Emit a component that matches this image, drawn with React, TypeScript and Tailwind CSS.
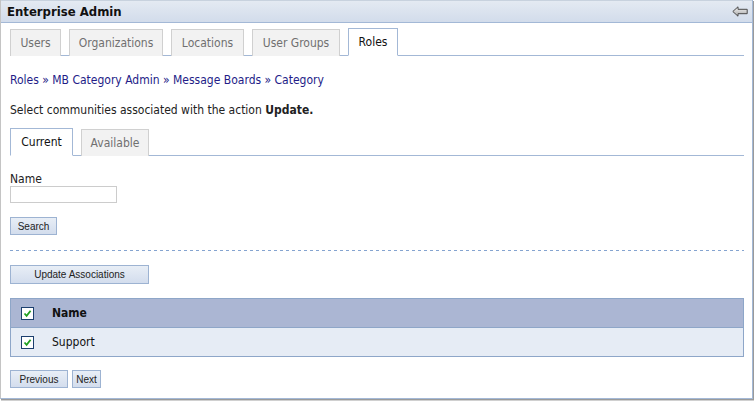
import React from 'react';

const font = { fontFamily: '"DejaVu Sans Condensed", "Liberation Sans", sans-serif' };

function Check() {
  return (
    <span className="inline-flex w-[13px] h-[13px] items-center justify-center border border-[#1c3f6e] bg-white">
      <svg width="9" height="9" viewBox="0 0 9 9">
        <path d="M1.5 4.5 L3.6 6.8 L7.6 1.8" fill="none" stroke="#21a021" strokeWidth="1.8" />
      </svg>
    </span>
  );
}

function BackArrow() {
  return (
    <svg width="16" height="11" viewBox="0 0 16 11">
      <defs>
        <linearGradient id="ag" x1="0" y1="0" x2="0" y2="1">
          <stop offset="0" stopColor="#f4f4f4" />
          <stop offset="1" stopColor="#a8a8a8" />
        </linearGradient>
      </defs>
      <path d="M0.8 5.5 L6 0.8 L6 3.3 L15.2 3.3 L15.2 7.7 L6 7.7 L6 10.2 Z" fill="url(#ag)" stroke="#4a4a4a" strokeWidth="1" strokeLinejoin="round" />
    </svg>
  );
}

function Tab({ label, active, w }: { label: string; active?: boolean; w: string }) {
  return (
    <div
      className={`${w} flex items-center justify-center text-[12px] border ${
        active
          ? 'bg-white border-[#a3b8d6] border-b-white text-[#111] mb-[-1px] h-[28px]'
          : 'bg-[#f2f2f2] border-[#d0d0d0] text-[#707070] mb-[-1px] border-b-0 h-[27px]'
      }`}
    >
      {label}
    </div>
  );
}

function Btn({ label, w }: { label: string; w: string }) {
  return (
    <button
      className={`${w} h-[18px] border border-[#9db3d2] bg-gradient-to-b from-[#e8eef6] to-[#d3dded] text-[10px] text-[#222] flex items-center justify-center`}
      style={{ fontFamily: '"Liberation Sans", Arial, sans-serif' }}
    >
      {label}
    </button>
  );
}

export default function App() {
  return (
    <div className="w-[754px] h-[401px] bg-white" style={font}>
      <div className="w-[753px] h-[399px] border-l border-l-[#c4c4c4] border-r border-b border-[#a3b8d6] shadow-[1px_1px_0_#9a9a9a,1px_2px_0_#d0d0d0] flex flex-col">
        {/* header */}
        <div className="h-[23px] shrink-0 flex items-center justify-between pl-[6px] pr-[4px] border-t border-t-[#c8d2de] border-b border-b-[#a3b8d6] bg-gradient-to-b from-[#e4eaf2] to-[#d2dceb]">
          <span className="font-bold text-[13px] text-[#111]">Enterprise Admin</span>
          <BackArrow />
        </div>

        <div className="flex-1 pl-[9px] pr-[8px] pt-[6px] flex flex-col">
          {/* main tabs */}
          <div className="flex gap-2 items-end border-b border-[#a3b8d6] h-[27px]">
            <Tab label="Users" w="w-[51px]" />
            <Tab label="Organizations" w="w-[94px]" />
            <Tab label="Locations" w="w-[73px]" />
            <Tab label="User Groups" w="w-[88px]" />
            <Tab label="Roles" w="w-[50px]" active />
          </div>

          <div className="mt-[17px] h-[14px] leading-[14px] text-[12px] text-[#231c87]">
            Roles » MB Category Admin » Message Boards » Category
          </div>

          <div className="mt-[16px] h-[14px] leading-[14px] text-[12px] text-[#222]">
            Select communities associated with the action <b>Update.</b>
          </div>

          {/* sub tabs */}
          <div className="mt-[11px] flex gap-2 items-end border-b border-[#a3b8d6] h-[28px]">
            <Tab label="Current" w="w-[63px]" active />
            <Tab label="Available" w="w-[68px]" />
          </div>

          <div className="mt-[16px] h-[14px] leading-[14px] text-[12px] text-[#222]">Name</div>
          <div className="w-[107px] h-[17px] border border-[#cccccc] bg-white" />

          <div className="mt-[14px]">
            <Btn label="Search" w="w-[47px]" />
          </div>

          <div className="mt-[15px] h-px bg-[repeating-linear-gradient(90deg,#85a4d0_0_3px,transparent_3px_6px)]" />

          <div className="mt-[14px]">
            <Btn label="Update Associations" w="w-[139px] h-[19px]" />
          </div>

          {/* table */}
          <div className="mt-[14px] border border-[#8ea6c8]">
            <div className="h-[29px] bg-[#abb6d3] border-b border-[#8ea6c8] flex items-center">
              <div className="w-[41px] pl-[10px] flex items-center">
                <Check />
              </div>
              <span className="font-bold text-[12px] text-[#111]">Name</span>
            </div>
            <div className="h-[28px] bg-[#e6ecf5] flex items-center">
              <div className="w-[41px] pl-[10px] flex items-center">
                <Check />
              </div>
              <span className="text-[12px] text-[#111]">Support</span>
            </div>
          </div>

          <div className="mt-[13px] flex gap-[4px]">
            <Btn label="Previous" w="w-[58px]" />
            <Btn label="Next" w="w-[29px]" />
          </div>
        </div>
      </div>
    </div>
  );
}
